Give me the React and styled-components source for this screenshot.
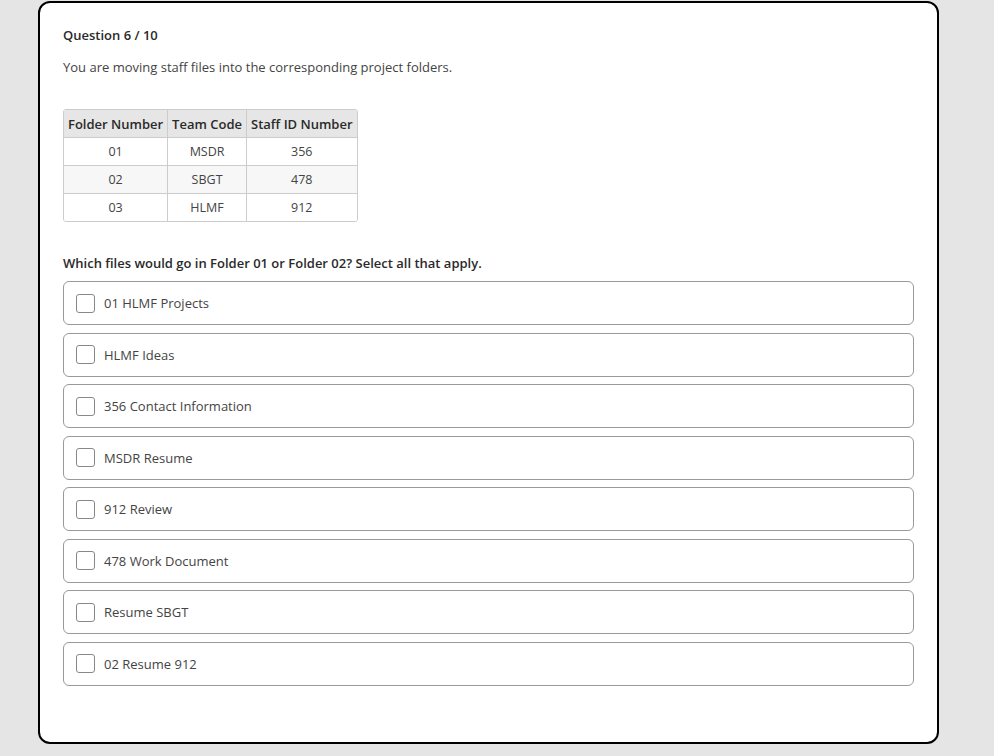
import styled, { createGlobalStyle } from 'styled-components';

const GlobalStyle = createGlobalStyle`
  html, body {
    margin: 0;
    padding: 0;
    background: #e5e5e5;
    font-family: "Open Sans", "Noto Sans", sans-serif;
  }
`;

const rows = [
  ['01', 'MSDR', '356'],
  ['02', 'SBGT', '478'],
  ['03', 'HLMF', '912'],
];

const options = [
  '01 HLMF Projects',
  'HLMF Ideas',
  '356 Contact Information',
  'MSDR Resume',
  '912 Review',
  '478 Work Document',
  'Resume SBGT',
  '02 Resume 912',
];

const App = () => {
  return (
    <Page>
      <GlobalStyle />
      <Card>
        <Title>Question 6 / 10</Title>
        <Intro>You are moving staff files into the corresponding project folders.</Intro>
        <Table>
          <thead>
            <tr>
              <Th>Folder Number</Th>
              <Th>Team Code</Th>
              <Th>Staff ID Number</Th>
            </tr>
          </thead>
          <tbody>
            {rows.map((r, i) => (
              <Tr key={i} $alt={i % 2 === 1}>
                {r.map((c, j) => (
                  <Td key={j}>{c}</Td>
                ))}
              </Tr>
            ))}
          </tbody>
        </Table>
        <Prompt>Which files would go in Folder 01 or Folder 02? Select all that apply.</Prompt>
        <Options>
          {options.map((o) => (
            <Option key={o}>
              <Box />
              <Label>{o}</Label>
            </Option>
          ))}
        </Options>
      </Card>
    </Page>
  );
};
export default App;

const Page = styled.div`
  padding: 1px 0 0 38px;
  height: 756px;
  box-sizing: border-box;
`;

const Card = styled.div`
  box-sizing: border-box;
  width: 901px;
  height: 743px;
  background: #fff;
  border: 2px solid #000;
  border-radius: 12px;
  padding: 23px 23px 0 23px;
`;

const Title = styled.div`
  font-size: 13px;
  font-weight: 600;
  color: #2a2a2a;
  line-height: 18px;
`;

const Intro = styled.p`
  margin: 14px 0 0;
  font-size: 13px;
  line-height: 18px;
  color: #444;
`;

const Table = styled.table`
  margin-top: 33px;
  border-collapse: separate;
  border-spacing: 0;
  border: 1px solid #ccc;
  border-radius: 3px;
  overflow: hidden;
  font-size: 12.5px;
`;

const Th = styled.th`
  background: #e6e6e6;
  color: #2a2a2a;
  font-weight: 600;
  font-size: 13px;
  height: 27px;
  padding: 0 4px;
  border-right: 1px solid #ccc;
  border-bottom: 1px solid #ccc;
  &:last-child {
    border-right: none;
  }
`;

const Tr = styled.tr`
  background: ${(p) => (p.$alt ? '#f7f7f7' : '#fff')};
  &:last-child td {
    border-bottom: none;
  }
`;

const Td = styled.td`
  text-align: center;
  color: #444;
  height: 27px;
  padding: 0 4px;
  border-right: 1px solid #ccc;
  border-bottom: 1px solid #ccc;
  &:last-child {
    border-right: none;
  }
`;

const Prompt = styled.div`
  margin-top: 32px;
  font-size: 13px;
  font-weight: 650;
  color: #2a2a2a;
  line-height: 18px;
`;

const Options = styled.div`
  margin-top: 9px;
  display: flex;
  flex-direction: column;
  gap: 7.5px;
`;

const Option = styled.div`
  box-sizing: border-box;
  height: 44px;
  border: 1px solid #999;
  border-radius: 6px;
  display: flex;
  align-items: center;
  padding-left: 12px;
  gap: 9px;
`;

const Box = styled.span`
  box-sizing: border-box;
  width: 19px;
  height: 19px;
  border: 1px solid #888;
  border-radius: 3px;
  background: #fff;
`;

const Label = styled.span`
  font-size: 13px;
  color: #444;
`;
